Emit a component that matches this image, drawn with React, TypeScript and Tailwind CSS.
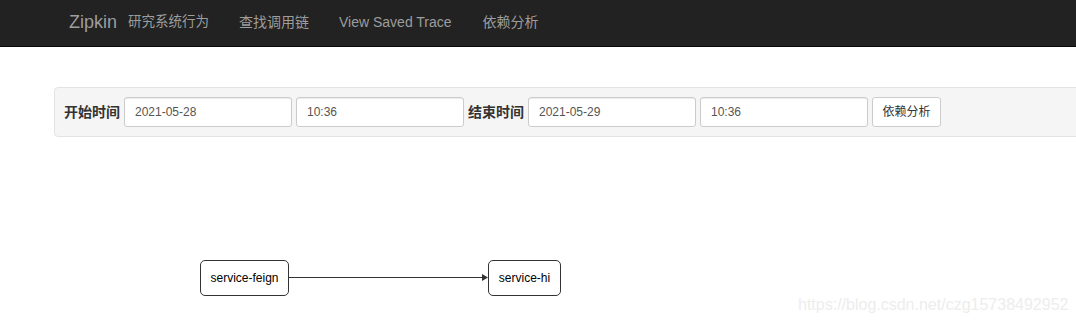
const cjk = "font-['Liberation_Sans','Noto_Sans_CJK_SC',sans-serif]";

function NavBar() {
  return (
    <nav className={`flex h-[47px] items-center border-b border-[#080808] bg-[#222222] pb-[2px] pl-[69px] text-[#9d9d9d] ${cjk}`}>
      <span className="text-[18px] leading-none">Zipkin</span>
      <span className="ml-[11px] text-[13.5px]">研究系统行为</span>
      <span className="ml-[30px] text-[14px]">查找调用链</span>
      <span className="ml-[30px] text-[14px]">View Saved Trace</span>
      <span className="ml-[31px] text-[14px]">依赖分析</span>
    </nav>
  );
}

function Field({ value }: { value: string }) {
  return (
    <div className="flex h-[30px] w-[168px] items-center rounded-[3px] border border-[#cccccc] bg-white pl-[10px] text-[12px] text-[#555555] shadow-[inset_0_1px_1px_rgba(0,0,0,0.075)]">
      {value}
    </div>
  );
}

function QueryPanel() {
  return (
    <div className={`ml-[54px] mt-[40px] flex w-[1200px] items-center gap-[4px] rounded-l-[4px] border border-[#e3e3e3] bg-[#f5f5f5] py-[9px] pl-[9px] ${cjk}`}>
      <span className="text-[14px] font-bold text-[#333333]">开始时间</span>
      <Field value="2021-05-28" />
      <Field value="10:36" />
      <span className="text-[14px] font-bold text-[#333333]">结束时间</span>
      <Field value="2021-05-29" />
      <Field value="10:36" />
      <button className="flex h-[30px] w-[69px] items-center justify-center rounded-[3px] border border-[#cccccc] bg-white text-[12px] text-[#333333]">
        依赖分析
      </button>
    </div>
  );
}

function Graph() {
  return (
    <div className="relative h-[184px] font-['Liberation_Sans',sans-serif]">
      <svg className="absolute left-0 top-0" width="1076" height="184">
        <line x1="289" y1="140.5" x2="484" y2="140.5" stroke="#333" strokeWidth="1" />
        <polygon points="482,137 488,140.5 482,144" fill="#333" />
      </svg>
      <div className="absolute left-[200px] top-[123px] flex h-[36px] w-[89px] items-center justify-center rounded-[5px] border border-[#333333] bg-white text-[12px] text-black">
        service-feign
      </div>
      <div className="absolute left-[488px] top-[123px] flex h-[36px] w-[73px] items-center justify-center rounded-[5px] border border-[#333333] bg-white text-[12px] text-black">
        service-hi
      </div>
      <div className="absolute left-[798px] top-[156px] text-[16px] text-[#ededed]">
        https://blog.csdn.net/czg15738492952
      </div>
    </div>
  );
}

export default function App() {
  return (
    <div className="h-[321px] w-[1076px] overflow-hidden bg-white">
      <NavBar />
      <QueryPanel />
      <Graph />
    </div>
  );
}
